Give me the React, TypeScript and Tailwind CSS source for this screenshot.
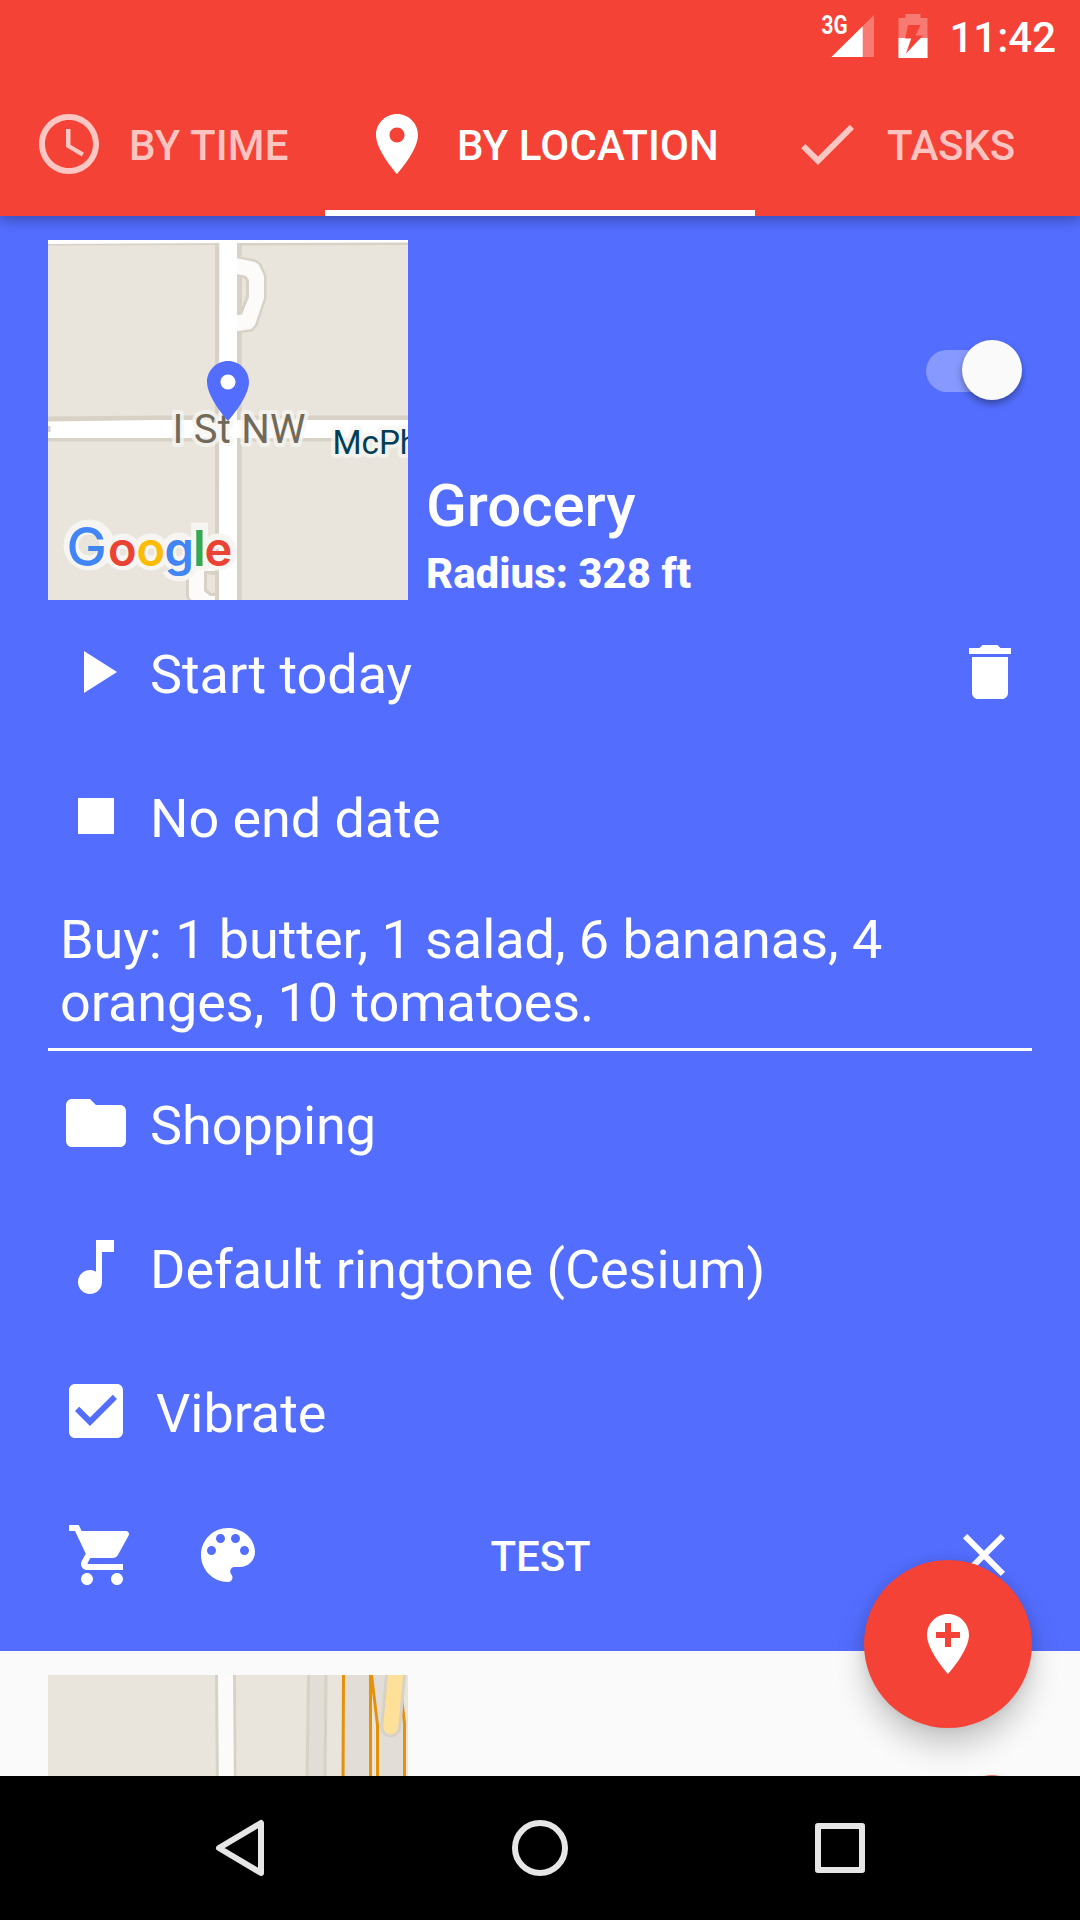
import React, { useState } from "react";
import clsx from "clsx";

const icons = {
  clock:
    "M11.99 2C6.47 2 2 6.48 2 12s4.47 10 9.99 10C17.52 22 22 17.52 22 12S17.52 2 11.99 2zM12 20c-4.42 0-8-3.58-8-8s3.58-8 8-8 8 3.58 8 8-3.58 8-8 8zm.5-13H11v6l5.25 3.15.75-1.23-4.5-2.67z",
  place:
    "M12 2C8.13 2 5 5.13 5 9c0 5.25 7 13 7 13s7-7.75 7-13c0-3.87-3.13-7-7-7zm0 9.5c-1.38 0-2.5-1.12-2.5-2.5s1.12-2.5 2.5-2.5 2.5 1.12 2.5 2.5-1.12 2.5-2.5 2.5z",
  done: "M9 16.2L4.8 12l-1.4 1.4L9 19 21 7l-1.4-1.4L9 16.2z",
  play: "M8 5v14l11-7z",
  stop: "M6 6h12v12H6z",
  trash: "M6 19c0 1.1.9 2 2 2h8c1.1 0 2-.9 2-2V7H6v12zM19 4h-3.5l-1-1h-5l-1 1H5v2h14V4z",
  folder: "M10 4H4c-1.1 0-1.99.9-1.99 2L2 18c0 1.1.9 2 2 2h16c1.1 0 2-.9 2-2V8c0-1.1-.9-2-2-2h-8l-2-2z",
  note: "M12 3v10.55c-.59-.34-1.27-.55-2-.55-2.21 0-4 1.79-4 4s1.79 4 4 4 4-1.79 4-4V7h4V3h-6z",
  checkbox:
    "M19 3H5c-1.11 0-2 .9-2 2v14c0 1.1.89 2 2 2h14c1.11 0 2-.9 2-2V5c0-1.1-.89-2-2-2zm-9 14l-5-5 1.41-1.41L10 14.17l7.59-7.59L19 8l-9 9z",
  cart: "M7 18c-1.1 0-1.99.9-1.99 2S5.9 22 7 22s2-.9 2-2-.9-2-2-2zM1 2v2h2l3.6 7.59-1.35 2.45c-.16.28-.25.61-.25.96 0 1.1.9 2 2 2h12v-2H7.42c-.14 0-.25-.11-.25-.25l.03-.12.9-1.63h7.45c.75 0 1.41-.41 1.75-1.03l3.58-6.49c.08-.14.12-.31.12-.48 0-.55-.45-1-1-1H5.21l-.94-2H1zm16 16c-1.1 0-1.99.9-1.99 2s.89 2 1.99 2 2-.9 2-2-.9-2-2-2z",
  palette:
    "M12 3c-4.97 0-9 4.03-9 9s4.03 9 9 9c.83 0 1.5-.67 1.5-1.5 0-.39-.15-.74-.39-1.01-.23-.26-.38-.61-.38-.99 0-.83.67-1.5 1.5-1.5H16c2.76 0 5-2.24 5-5 0-4.42-4.03-8-9-8zm-5.5 9c-.83 0-1.5-.67-1.5-1.5S5.67 9 6.5 9 8 9.67 8 10.5 7.33 12 6.5 12zm3-4C8.67 8 8 7.33 8 6.5S8.67 5 9.5 5s1.5.67 1.5 1.5S10.33 8 9.5 8zm5 0c-.83 0-1.5-.67-1.5-1.5S13.67 5 14.5 5s1.5.67 1.5 1.5S15.33 8 14.5 8zm3 4c-.83 0-1.5-.67-1.5-1.5S16.67 9 17.5 9s1.5.67 1.5 1.5-.67 1.5-1.5 1.5z",
  close: "M19 6.41L17.59 5 12 10.59 6.41 5 5 6.41 10.59 12 5 17.59 6.41 19 12 13.41 17.59 19 19 17.59 13.41 12z",
  addPlace:
    "M12 2C8.14 2 5 5.14 5 9c0 5.25 7 13 7 13s7-7.75 7-13c0-3.86-3.14-7-7-7zm4 8h-3v3h-2v-3H8V8h3V5h2v3h3v2z",
};

type IconName = keyof typeof icons;

function Icon({ name }: { name: IconName }) {
  return (
    <svg viewBox="0 0 24 24" className="size-[72px] shrink-0" fill="currentColor">
      <path d={icons[name]} />
    </svg>
  );
}

function StatusBar() {
  return (
    <div className="h-[72px] flex items-start justify-end pr-[24px]">
      <svg width="56" height="72" viewBox="820 0 56 72" fill="#fff">
        <text x="821.5" y="33.5" fontSize="26" fontWeight="700" textLength="26" lengthAdjust="spacingAndGlyphs">3G</text>
        <path d="M831.5 57L874 15V57z" fillOpacity="0.3" />
        <path d="M831.5 57L862.7 26.2V57z" />
      </svg>
      <svg width="30" height="72" viewBox="898.5 0 30 72" className="ml-[22px]">
        <path d="M899 18h7v-4h15v4h7v40h-29z" fill="#fff" fillOpacity="0.3" />
        <path d="M899 38h29v20h-29z" fill="#fff" />
        <path d="M908.5 25h12.5l-5 10.5h7.5L906.5 53.5l5.2-15h-6z" fill="#f44336" />
      </svg>
      <span className="ml-[21px] mt-[13px] text-[42px] leading-[49px] font-medium">11:42</span>
    </div>
  );
}

const tabs: { label: string; icon: IconName; className: string }[] = [
  { label: "BY TIME", icon: "clock", className: "w-[325px] pl-[33px] tracking-[0.15px]" },
  { label: "BY LOCATION", icon: "place", className: "w-[430px] pl-[36px] tracking-[0.12px]" },
  { label: "TASKS", icon: "done", className: "w-[325px] pl-[36px] tracking-[-0.2px]" },
];

function Tabs() {
  const [active, setActive] = useState(1);

  return (
    <div className="flex h-[144px]">
      {tabs.map((tab, i) => (
        <button key={tab.label} onClick={() => setActive(i)}
          className={clsx("flex items-center gap-6 border-y-[6px] border-t-transparent whitespace-nowrap text-[42px] font-medium", tab.className,
            i === active ? "border-b-white text-white" : "border-b-transparent text-white/70")}>
          <Icon name={tab.icon} />
          <span className="pt-[3px]">{tab.label}</span>
        </button>
      ))}
    </div>
  );
}

const googleLetters = [
  { char: "G", x: 18.5, size: 54, weight: 500, color: "#4285f4" },
  { char: "o", x: 60, size: 47, weight: 600, color: "#ea4335" },
  { char: "o", x: 88.5, size: 47, weight: 600, color: "#fbbc05" },
  { char: "g", x: 116.5, size: 47, weight: 600, color: "#4285f4" },
  { char: "l", x: 145, size: 49, weight: 600, color: "#34a853" },
  { char: "e", x: 156.5, size: 47, weight: 600, color: "#ea4335" },
];

function GoogleMark() {
  return (
    <g fontFamily="Inter, sans-serif">
      {/* Light halo sits under all letters */}
      <g fill="none" stroke="#f7f5f1" strokeWidth="15" strokeLinejoin="round">
        <circle cx="41" cy="305" r="18" />
        <circle cx="75" cy="312" r="11" />
        <circle cx="103" cy="312" r="11" />
        <path d="M120 312a11 12 0 1 0 22 0a11 12 0 1 0-22 0M142 300V322Q142 334 131 334Q124 334 121 329" />
        <path d="M151.500 291V322" strokeWidth="17" strokeLinecap="square" />
        <circle cx="170.500" cy="312" r="11" />
      </g>
      <text y="325.500">
        {googleLetters.map((l) => (
          <tspan key={l.x} x={l.x} fontSize={l.size} fontWeight={l.weight} fill={l.color}>{l.char}</tspan>
        ))}
      </text>
    </g>
  );
}

function GroceryMap() {
  return (
    <svg width="360" height="360" viewBox="0 0 360 360" className="shrink-0 bg-[#e9e5dc]">
      {/* Roads */}
      <path d="M0 3.5L170 3M190 3.5L360 3" stroke="#d7d1c6" strokeWidth="4" />
      <path d="M0 0H360V2.5L190 3L0 4z" fill="#fff" />
      <path d="M189 18.3L207 22L211 25L216 36V58L207 85L203 89L189 91.3z" fill="#fcfbfa" stroke="#d7d1c6" strokeWidth="5" strokeLinejoin="round" />
      <path d="M189 18.3L207 22L211 25L216 36V58L207 85L203 89L189 91.3z" fill="#fcfbfa" />
      <path d="M189 34L198 36L201 40V57L194 74.5L189 75.3z" fill="#d7d1c6" />
      <path d="M194 38L197 39L198 42V56L194 67z" fill="#e9e5dc" />
      <path d="M138 318H171V360H141Q138 359 138 355z" fill="#d7d1c6" />
      <path d="M141 318H171V360H144Q141 359 141 355z" fill="#fcfbfa" />
      <path d="M156 331H171V356H162L156 351z" fill="#d7d1c6" />
      <path d="M159 334L167 335V353H163.5L159 349z" fill="#e9e5dc" />
      <path d="M0 176.5L110 175.5H360V201.5H0z" fill="#d7d1c6" />
      <path d="M167 3H171V360H167zM189 3H193.7V16H189zM189 93H193.7V360H189z" fill="#d7d1c6" />
      <path d="M0 181.5L110 180H360V198H0z" fill="#fff" />
      <path d="M171.500 0H189V360H171z" fill="#fff" />
      <path d="M0 186H2.500V192H0z" fill="#d7d1c6" />

      {/* Labels */}
      <g stroke="#f7f5f1" strokeOpacity="0.8" strokeLinejoin="round" paintOrder="stroke">
        <text x="124.500" y="202.700" fontSize="40" fill="#716a5a" strokeWidth="8" textLength="133">I St NW</text>
        <text x="284.500" y="213.700" fontSize="33.300" fill="#023e58" strokeWidth="8">McPh</text>
      </g>
      <GoogleMark />

      <circle cx="180" cy="142" r="9" fill="#fff" />
      <path d={icons.place} transform="translate(144 115) scale(3)" fill="#536dfe" />
    </svg>
  );
}

function StationMap() {
  return (
    <svg width="360" height="360" viewBox="0 0 360 360" className="shrink-0 bg-[#e9e5dc]">
      <path d="M167 0H188L189.500 360H170z" fill="#d7d1c6" />
      <path d="M170 0H185L188 360H173z" fill="#fcfbfa" />
      <path d="M260.500 0H278L276 360H258z" fill="#e2ddd6" />
      <path d="M260.500 0L259 110V360M278 0L277 110V360" stroke="#d7d1c6" strokeWidth="3" fill="none" />
      <path d="M295.500 0H322V360H295.500zM324 0H348L356 48V360H329.500V50z" fill="#e2ddd6" />
      <path d="M295.500 0L295 110V360M322.500 0V110V360M323.500 0L329.500 50V360M353 18L356.500 48V360" stroke="#e69208" strokeWidth="3" fill="none" />
      <path d="M348.500 -10L342.700 52" stroke="#d7d1c6" strokeWidth="21" strokeLinecap="round" />
      <path d="M348.500 -10L342.700 52" stroke="#ffe099" strokeWidth="15" strokeLinecap="round" />
    </svg>
  );
}

function Toggle({ trackClass, thumbClass }: { trackClass: string; thumbClass: string }) {
  return (
    <div className="relative w-[95.5px] h-[60px] mt-[100px] mr-[10.5px] ml-auto">
      <div className={clsx("absolute inset-x-0 top-[10px] h-[42px] rounded-full", trackClass)} />
      <div className={clsx("absolute right-0 top-0 size-[60px] rounded-full shadow-[0_4px_7px_rgba(0,0,0,0.35)]", thumbClass)} />
    </div>
  );
}

function Row({ icon, label, wide, children }: { icon: IconName; label: string; wide?: boolean; children?: React.ReactNode }) {
  return (
    <div className="flex h-36 items-center pl-3 pr-[6px]">
      <Icon name={icon} />
      <span className={clsx("pt-[5px]", wide ? "ml-6" : "ml-[18px]")}>{label}</span>
      {children}
    </div>
  );
}

function ReminderCard() {
  return (
    <div className="bg-[#536dfe] px-12 py-6 text-[54px] leading-[63px] tracking-[-0.06px] text-white">
      <div className="flex h-[360px]">
        <GroceryMap />
        <div className="ml-[18px] flex flex-col justify-end pb-[2px]">
          <h2 className="mb-2 text-[60px] leading-[70px] font-medium">Grocery</h2>
          <p className="text-[42px] leading-[49px] font-extrabold tracking-normal">Radius: 328 ft</p>
        </div>
        <Toggle trackClass="bg-white/30" thumbClass="bg-[#fafafa]" />
      </div>

      <Row icon="play" label="Start today">
        <button className="ml-auto"><Icon name="trash" /></button>
      </Row>
      <Row icon="stop" label="No end date" />
      <p className="border-b-[3px] border-white px-3 pt-5 pb-[14px]">
        Buy: 1 butter, 1 salad, 6 bananas, 4 oranges, 10 tomatoes.
      </p>
      <Row icon="folder" label="Shopping" />
      <Row icon="note" label="Default ringtone (Cesium)" />
      <Row icon="checkbox" label="Vibrate" wide />

      {/* Actions */}
      <div className="grid h-36 grid-cols-3 items-center pl-[18px] pr-3">
        <div className="flex gap-[54px]">
          <Icon name="cart" />
          <Icon name="palette" />
        </div>
        <button className="pt-[3px] pr-[5px] text-[42px] font-medium">TEST</button>
        <button className="justify-self-end"><Icon name="close" /></button>
      </div>
    </div>
  );
}

function NavBar() {
  return (
    <div className="flex h-36 shrink-0 items-center justify-between bg-black px-[204px]">
      <svg width="72" height="72" viewBox="0 0 72 72" fill="none" stroke="#e6e6e6" strokeWidth="6" strokeLinejoin="round">
        <path d="M57 11V61L15 36z" />
      </svg>
      <svg width="72" height="72" viewBox="0 0 72 72" fill="none" stroke="#e6e6e6" strokeWidth="6">
        <circle cx="36" cy="36" r="25" />
      </svg>
      <svg width="72" height="72" viewBox="0 0 72 72" fill="none" stroke="#e6e6e6" strokeWidth="6" strokeLinejoin="round">
        <path d="M14 14H58V58H14z" />
      </svg>
    </div>
  );
}

export default function App() {
  return (
    <div className="flex h-[1920px] w-[1080px] flex-col overflow-hidden bg-[#fafafa] font-['Roboto',sans-serif]">
      <header className="relative z-10 shrink-0 bg-[#f44336] text-white shadow-[0_4px_12px_rgba(0,0,0,0.3)]">
        <StatusBar />
        <Tabs />
      </header>

      <main className="relative min-h-0 flex-1 overflow-hidden">
        <ReminderCard />
        <div className="flex px-12 pt-6">
          <StationMap />
          <Toggle trackClass="bg-[#e57373]/30" thumbClass="bg-[#e57373]" />
        </div>

        <button className="absolute bottom-12 right-12 flex size-[168px] items-center justify-center rounded-full bg-[#f44336] text-white shadow-[0_18px_30px_rgba(0,0,0,0.2),0_0_12px_rgba(0,0,0,0.1)]">
          <Icon name="addPlace" />
        </button>
      </main>

      <NavBar />
    </div>
  );
}
